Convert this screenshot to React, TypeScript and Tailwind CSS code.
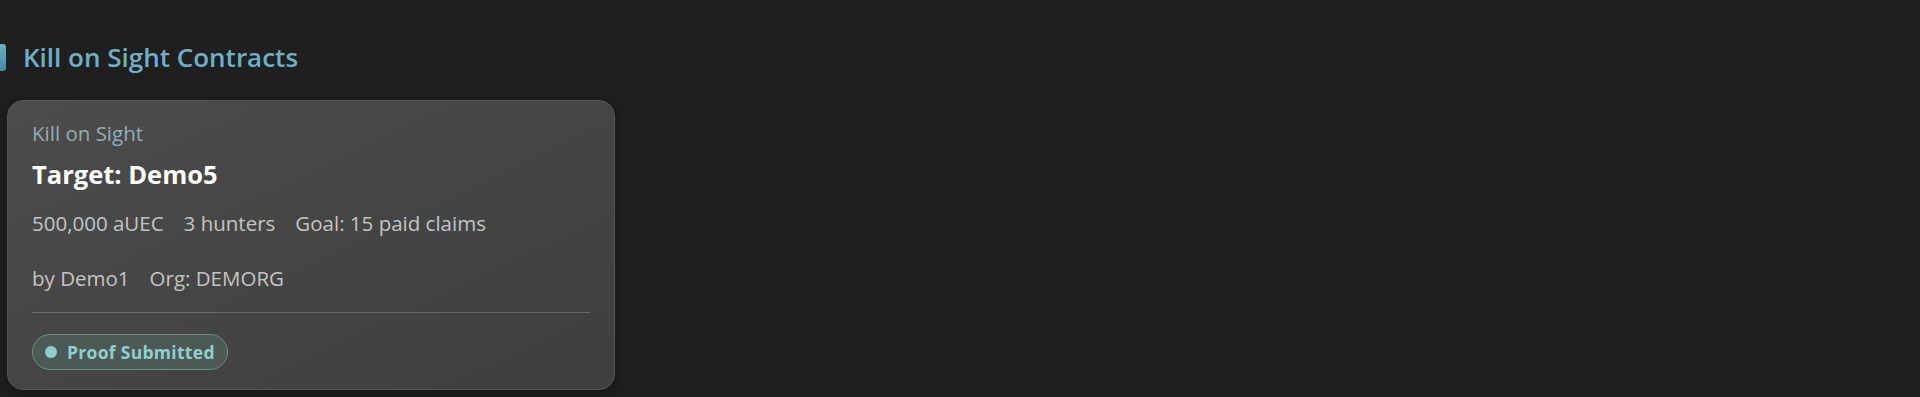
import React from 'react';

const font = { fontFamily: '"Open Sans", "Noto Sans", "Liberation Sans", sans-serif' };

function StatusBadge({ label }: { label: string }) {
  return (
    <span className="inline-flex h-[36px] items-center gap-[10px] rounded-full border border-[#6f8b87] bg-[#4d5957] pl-[12px] pr-[12px]">
      <span className="h-[12px] w-[12px] rounded-full bg-[#8ecdc8]" />
      <span className="text-[17.5px] font-bold tracking-[0.3px] text-[#8fd0cb]">{label}</span>
    </span>
  );
}

function ContractCard() {
  return (
    <div className="w-[608px] rounded-[16px] border border-[#585858] bg-gradient-to-br from-[#4c4c4c] to-[#3e3e3e] px-[24px] pt-[18px] pb-[19px] shadow-[0_2px_8px_rgba(0,0,0,0.35)]">
      <div className="text-[20.5px] leading-[28px] text-[#93aeb4]">Kill on Sight</div>
      <div className="mt-[10px] text-[25.5px] font-bold leading-[34px] text-white">Target: Demo5</div>
      <div className="mt-[18px] flex gap-[20px] text-[20.5px] leading-[28px] text-[#c4c4c4]">
        <span>500,000 aUEC</span>
        <span>3 hunters</span>
        <span>Goal: 15 paid claims</span>
      </div>
      <div className="mt-[27px] flex gap-[20px] text-[20.5px] leading-[28px] text-[#c4c4c4]">
        <span>by Demo1</span>
        <span>Org: DEMORG</span>
      </div>
      <div className="mt-[20px] border-t border-[#6a6a6a]" />
      <div className="mt-[21px]">
        <StatusBadge label="Proof Submitted" />
      </div>
    </div>
  );
}

export default function App() {
  return (
    <div className="min-h-screen bg-[#1f1f1f] pt-[44px]" style={font}>
      <h2 className="flex items-center gap-[17px]">
        <span className="h-[27px] w-[6px] rounded-r-[3px] bg-gradient-to-b from-[#6cb0c8] to-[#4b87a2]" />
        <span className="text-[26px] font-semibold leading-[27px] text-[#6eb0c7]">Kill on Sight Contracts</span>
      </h2>
      <div className="mt-[29px] pl-[7px]">
        <ContractCard />
      </div>
    </div>
  );
}
